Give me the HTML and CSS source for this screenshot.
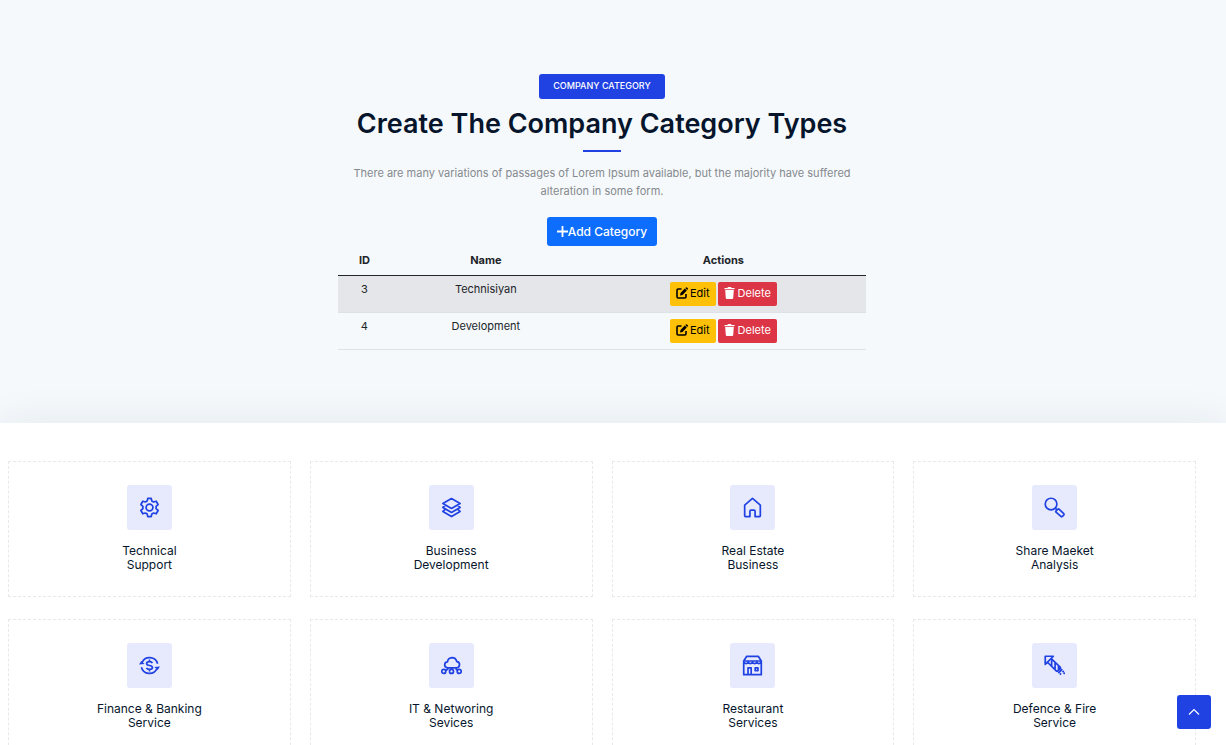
FILE: index.html
```html
<!DOCTYPE html>
<html lang="en">
<head>
<meta charset="utf-8">
<meta name="viewport" content="width=device-width, initial-scale=1">
<title>Company Category</title>
<link rel="stylesheet" href="styles.css">
</head>
<body>
<svg class="sprite" aria-hidden="true">
  <symbol id="edit" viewBox="0 0 12 12"><path d="M5.500 2H2.200Q1 2 1 3.200V9.800Q1 11 2.200 11H8.800Q10 11 10 9.800V7" fill="none" stroke="currentColor" stroke-width="1.600"/><path d="M4 8.400 4.500 5.900 8.800 1.600 10.800 3.600 6.500 7.900ZM9.300 1.100 10 .4Q10.500 0 11 .5L11.800 1.300Q12.200 1.800 11.800 2.300L11.200 3Z" fill="currentColor"/></symbol>
  <symbol id="trash" viewBox="0 0 11 12"><path d="M.5 1H3.400L4 0H7L7.600 1H10.500V2.300H.5ZM1.200 3H9.800L9.200 11Q9.100 12 8.200 12H2.800Q1.900 12 1.800 11Z" fill="currentColor"/></symbol>
</svg>
<main>
  <section class="hero">
    <div class="hero-inner">
      <span class="badge">COMPANY CATEGORY</span>
      <h1 class="title">Create The Company Category Types</h1>
      <p class="intro">There are many variations of passages of Lorem Ipsum available, but the majority have suffered alteration in some form.</p>
      <button class="btn btn-add" type="button"><svg class="plus" viewBox="0 0 11 11" aria-hidden="true"><path d="M5.500 0V11M0 5.500H11"/></svg>Add Category</button>
      <table class="categories">
        <thead><tr><th class="col-id" scope="col">ID</th><th class="col-name" scope="col">Name</th><th scope="col">Actions</th></tr></thead>
        <tbody>
          <tr><td>3</td><td>Technisiyan</td><td><div class="actions"><button class="btn btn-edit" type="button"><svg class="edit-icon" aria-hidden="true"><use href="#edit"/></svg>Edit</button><button class="btn btn-delete" type="button"><svg class="trash-icon" aria-hidden="true"><use href="#trash"/></svg>Delete</button></div></td></tr>
          <tr><td>4</td><td>Development</td><td><div class="actions"><button class="btn btn-edit" type="button"><svg class="edit-icon" aria-hidden="true"><use href="#edit"/></svg>Edit</button><button class="btn btn-delete" type="button"><svg class="trash-icon" aria-hidden="true"><use href="#trash"/></svg>Delete</button></div></td></tr>
        </tbody>
      </table>
    </div>
  </section>
  <section class="services">
    <div class="grid">
      <article class="card"><span class="tile"><svg class="icon" viewBox="0 0 22 22" aria-hidden="true"><path d="M9.200 1.400H12.800L13.400 4.100 15.300 5.200 18 4.400 20 7.900 17.900 9.900V12.100L20 14.100 18 17.600 15.300 16.800 13.400 17.900 12.800 20.600H9.200L8.600 17.900 6.700 16.800 4 17.600 2 14.100 4.100 12.100V9.900L2 7.900 4 4.400 6.700 5.200 8.600 4.100Z"/><circle cx="11" cy="11" r="3.600"/></svg></span><h2 class="name">Technical<br>Support</h2></article>
      <article class="card"><span class="tile"><svg class="icon" viewBox="0 0 22 22" aria-hidden="true"><path d="M11 1.600 20 6.800 11 12 2 6.800ZM4.500 8.800 2 10.900 11 16.200 20 10.900 17.500 8.800M4.500 12.900 2 15.100 11 20.500 20 15.100 17.500 12.900"/></svg></span><h2 class="name">Business<br>Development</h2></article>
      <article class="card"><span class="tile"><svg class="icon" viewBox="0 0 22 22" aria-hidden="true"><path d="M2.800 8.600 11 1.500 19.200 8.600V19.700Q19.200 20.500 18.400 20.500H13.700V15Q13.700 13.800 12.600 13.800H9.400Q8.300 13.800 8.300 15V20.500H3.600Q2.800 20.500 2.800 19.700Z"/></svg></span><h2 class="name">Real Estate<br>Business</h2></article>
      <article class="card"><span class="tile"><svg class="icon" viewBox="0 0 22 22" aria-hidden="true"><circle cx="7.400" cy="7.400" r="6.100"/><path d="M11.800 11.800 13.300 13.300M12.500 14.700 14.500 12.700Q15.300 12.200 16 12.900L20.700 17.500Q21.300 18.200 20.700 18.900L19.200 20.400Q18.500 21 17.700 20.300L12.600 15.900Q12 15.300 12.500 14.700Z"/></svg></span><h2 class="name">Share Maeket<br>Analysis</h2></article>
      <article class="card"><span class="tile"><svg class="icon" viewBox="0 0 22 22" aria-hidden="true"><path d="M3.200 7.800A8.700 8.700 0 0 1 19.500 9.200M18.800 14.200A8.700 8.700 0 0 1 2.500 12.800M14 8.500Q13.500 7 11 7 8 7 8 9 8 10.700 11 11 14.100 11.300 14.100 13.200 14.100 15 11 15 8.500 15 7.900 13.500M11 4.800V7M11 15V17.200"/><path class="solid" d="M0 9.900 2.400 6.200 6 9.400ZM16 12.600 19.600 15.800 22 12.100Z"/></svg></span><h2 class="name">Finance &amp; Banking<br>Service</h2></article>
      <article class="card"><span class="tile"><svg class="icon" viewBox="0 0 22 22" aria-hidden="true"><path d="M7 13.500Q3.500 13 3.900 9.800 4.300 7.300 6.800 7.200 7.200 3 11.500 2.700 15.500 2.700 16.400 6.700 19.600 7.400 19.400 10.300 19 13.500 16 13.500H7M11 13.500V15M7 13.500V15.200L5 15.800M16 13.500V15.200L17.500 15.800"/><circle cx="2.900" cy="17.200" r="2.100"/><circle cx="11" cy="17.200" r="2.100"/><circle cx="19.100" cy="17.200" r="2.100"/></svg></span><h2 class="name">IT &amp; Networing<br>Sevices</h2></article>
      <article class="card"><span class="tile"><svg class="icon" viewBox="0 0 22 22" aria-hidden="true"><path d="M4.800 1.500H17.200L20.200 6.300V20.600H1.800V6.300ZM1.800 6.300H20.200M2 7.600Q4.500 10.400 6.500 7.600 8.800 10.400 11 7.600 13.200 10.400 15.500 7.600 17.500 10.400 20 7.600M6.300 20.500V13.500H9.600V20.500M13.800 13.400H16.700V16.300H13.800Z"/></svg></span><h2 class="name">Restaurant<br>Services</h2></article>
      <article class="card"><span class="tile"><svg class="icon" viewBox="0 0 22 22" aria-hidden="true"><path d="M1.300 1.300H9.800L1.300 9.800ZM7.600 3.700 17.700 13.400M3.700 7.600 13.600 17.500M17.700 13.400 13.600 17.500M8 5.500V11.500M11.600 8.500V14.700M15.200 11.500V15.500M19.100 14.900 15 19M20.700 16.600 19.300 18M17.900 19.300 16.700 20.500M21.900 18.400 20.500 19.800"/></svg></span><h2 class="name">Defence &amp; Fire<br>Service</h2></article>
    </div>
  </section>
</main>
<a class="to-top" href="#" aria-label="Back to top"><svg class="chevron" viewBox="0 0 12 12" aria-hidden="true"><path d="M1 8.500 6 3.500 11 8.500"/></svg></a>
</body>
</html>
```
FILE: styles.css
```css
* { box-sizing: border-box; }
body { margin: 0; font-family: Inter, "Liberation Sans", sans-serif; color: #212529; background: #fff; }
main { overflow: hidden; }
.sprite { display: none; }
.hero { background: #f5f9fc; padding: 74px 22px 73px 0; }
.hero-inner { width: 100%; max-width: 528px; margin: 0 auto; display: flex; flex-direction: column; align-items: center; }
.badge { background: #2042e3; color: #fff; font-size: 9px; font-weight: 500; line-height: 15px; padding: 4px 14px 6px; border-radius: 3px; }
.title { margin: 8px 0 0; color: #06152b; font-size: 27px; font-weight: 600; line-height: 34px; text-align: center; }
.title::after { content: ""; display: block; width: 38px; height: 2px; margin: 9px auto 0; background: #2042e3; }
.intro { margin: 12px 0 17px; padding: 0 10px; color: #86898e; font-size: 11px; line-height: 18px; text-align: center; }
.btn { display: inline-flex; align-items: center; justify-content: center; border: 0; font-family: inherit; border-radius: 3px; cursor: pointer; }
.btn-add { height: 29px; padding: 0 10px; background: #0d6efd; color: #fff; font-size: 12px; font-weight: 500; }
.plus { width: 11px; height: 11px; fill: none; stroke: currentColor; stroke-width: 1.800; }
.categories { width: 100%; border-collapse: collapse; table-layout: fixed; font-size: 11px; line-height: 14px; text-align: center; }
.categories th { padding: 7px 6px 8px; font-weight: 700; border-bottom: 1px solid #212529; }
.categories td { padding: 6px; vertical-align: top; border-bottom: 1px solid #dee2e6; }
.categories tbody tr:nth-child(odd) { background: #e5e6ea; }
.col-id { width: 10%; }
.col-name { width: 36%; }
.actions { display: flex; justify-content: center; gap: 2px; }
.actions .btn { height: 24px; padding: 0 6px 2px; font-size: 11px; border-radius: 2px; }
.actions .btn-edit { background: #ffc107; color: #000; }
.actions .btn-delete { background: #dc3545; color: #fff; }
.edit-icon { width: 12px; height: 12px; margin-right: 2px; }
.trash-icon { width: 11px; height: 12px; margin-right: 3px; }
.services { position: relative; background: #fff; padding: 38px 30px 38px 8px; box-shadow: 0 0 38px rgba(6, 34, 50, 0.08); }
.grid { display: grid; grid-template-columns: repeat(4, 1fr); gap: 22px 19px; }
.card { display: flex; flex-direction: column; align-items: center; padding: 23px 15px 24px; border: 1px dashed #e9e9e9; }
.tile { display: flex; align-items: center; justify-content: center; width: 45px; height: 45px; border-radius: 3px; background: #e7eafd; }
.icon { width: 21px; height: 21px; fill: none; stroke: #2042e3; stroke-width: 1.800; stroke-linejoin: round; }
.icon .solid { fill: #2042e3; stroke: none; }
.name { margin: 14px 0 0; color: #06152b; font-size: 12px; font-weight: 400; line-height: 14px; text-align: center; }
.to-top { position: fixed; right: 15px; bottom: 16px; display: flex; align-items: center; justify-content: center; width: 34px; height: 34px; background: #2042e3; color: #fff; border-radius: 3px; }
.chevron { width: 12px; height: 12px; fill: none; stroke: currentColor; stroke-width: 1.200; }
```
